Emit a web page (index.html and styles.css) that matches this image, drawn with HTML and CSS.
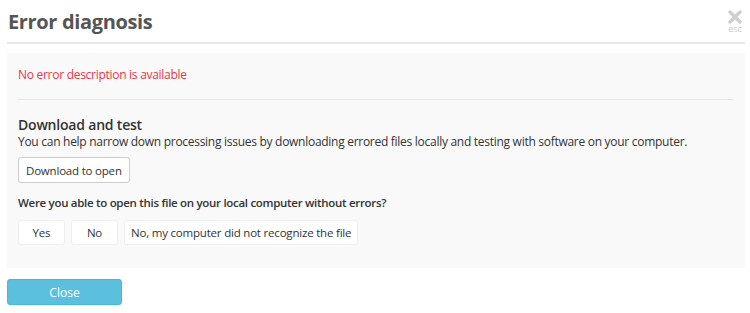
FILE: index.html
```html
<!DOCTYPE html>
<html lang="en">
<head>
  <meta charset="UTF-8" />
  <title>Error diagnosis</title>
  <link rel="stylesheet" href="styles.css">
</head>
<body>
  <div class="modal">
    <div class="modal-header">
      <h1>Error diagnosis</h1>
      <div class="dismiss">
        <svg width="14" height="14" viewBox="0 0 14 14"><path d="M2 2 L12 12 M12 2 L2 12" stroke="#cfcfcf" stroke-width="3.4" stroke-linecap="round"/></svg>
        <span>esc</span>
      </div>
    </div>

    <div class="panel">
      <p class="error-text">No error description is available</p>
      <hr>
      <h2>Download and test</h2>
      <p>You can help narrow down processing issues by downloading errored files locally and testing with software on your computer.</p>
      <button class="btn">Download to open</button>
      <p class="question">Were you able to open this file on your local computer without errors?</p>
      <div class="answers">
        <button class="btn flat btn-short">Yes</button>
        <button class="btn flat btn-short">No</button>
        <button class="btn flat">No, my computer did not recognize the file</button>
      </div>
    </div>

    <button class="btn-close">Close</button>
  </div>
</body>
</html>
```

FILE: styles.css
```css
body {
  margin: 0;
  background-color: #fff;
  font-family: "Open Sans", "Noto Sans", sans-serif;
  color: #333;
}
.modal {
  padding: 0 5px 0 7px;
}
.modal-header {
  display: flex;
  justify-content: space-between;
  align-items: flex-start;
  border-bottom: 2px solid #e8e8e8;
  height: 42px;
}
.modal-header h1 {
  margin: 8px 0 0 1px;
  font-size: 20px;
  font-weight: 700;
  color: #555;
  letter-spacing: -0.35px;
}
.dismiss {
  display: flex;
  flex-direction: column;
  align-items: center;
  margin: 10px 3px 0 0;
  color: #ccc;
  font-size: 9px;
  line-height: 10px;
}
.panel {
  margin-top: 9px;
  background-color: #f9f9f9;
  padding: 12px 11px 23px 11px;
  letter-spacing: -0.28px;
}
.panel p {
  margin: 0;
  font-size: 12px;
  line-height: 18px;
}
.error-text {
  color: #e8374a;
  padding-top: 1px;
}
.panel hr {
  border: 0;
  border-top: 1px solid #e6e6e6;
  margin: 15px 1px 16px 0;
}
.panel h2 {
  margin: 1px 0 -1px;
  font-size: 14px;
  font-weight: 600;
  line-height: 18px;
  letter-spacing: -0.2px;
}
.btn {
  font-family: inherit;
  font-size: 11.5px;
  letter-spacing: -0.2px;
  color: #333;
  background-color: #fff;
  border: 1px solid #ccc;
  border-radius: 3px;
  padding: 0 7px;
  height: 26px;
  margin-top: 6px;
  cursor: pointer;
}
.panel .question {
  font-size: 11.5px;
  font-weight: 600;
  margin-top: 11px;
  letter-spacing: -0.3px;
}
.answers {
  display: flex;
  gap: 6px;
  margin-top: 8px;
}
.btn.flat {
  border-color: #efefef;
  height: 25px;
  margin-top: 0;
  padding: 0 6px;
}
.btn-short {
  width: 47px;
}
.btn-close {
  margin-top: 11px;
  width: 115px;
  height: 26px;
  background-color: #5bc0de;
  border: 1px solid #46b8da;
  border-radius: 3px;
  color: #fff;
  font-family: inherit;
  font-size: 12px;
  cursor: pointer;
}
```
